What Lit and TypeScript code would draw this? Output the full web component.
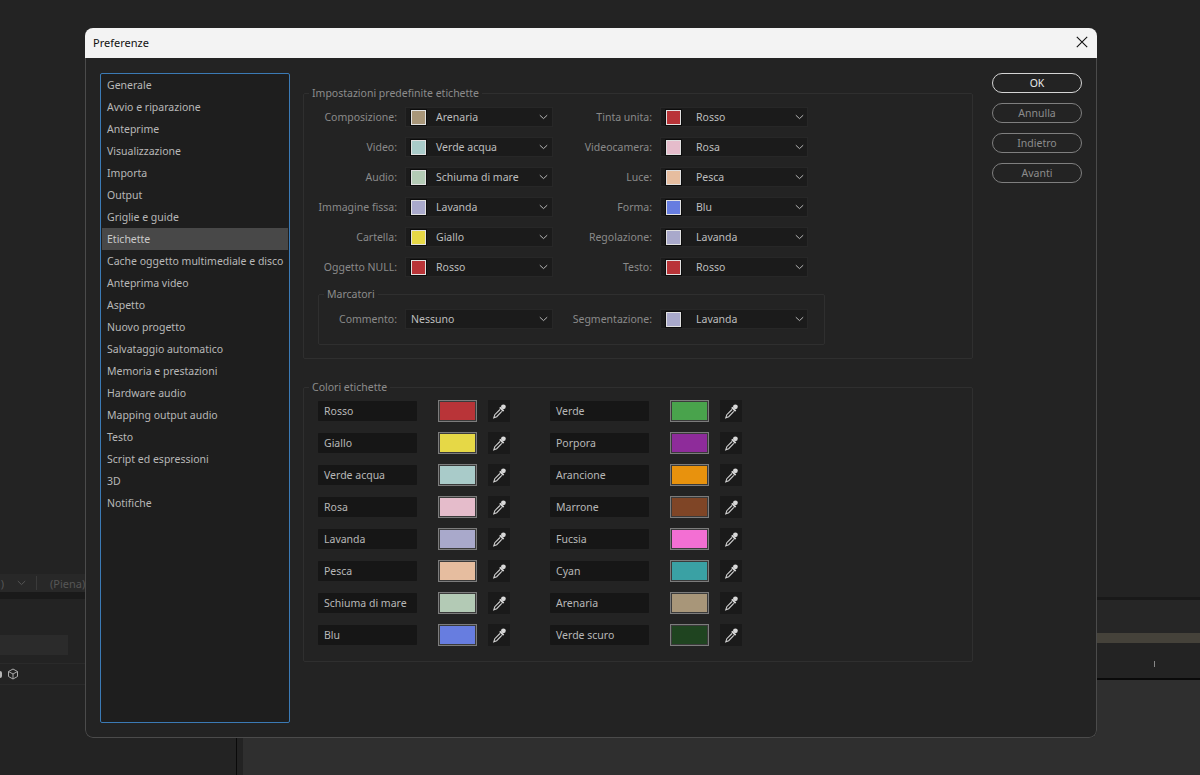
import { LitElement, html, css, svg } from "lit";
import { customElement } from "lit/decorators.js";

const C: Record<string, string> = {
  Rosso: "#b93438", Giallo: "#e6d846", "Verde acqua": "#a9cbc9", Rosa: "#e5bccb", Lavanda: "#a9a9cb",
  Pesca: "#e6bd9f", "Schiuma di mare": "#b3cab5", Blu: "#677de0", Verde: "#49a34c", Porpora: "#8e2c9a",
  Arancione: "#e8920d", Marrone: "#7f4526", Fucsia: "#f36fd3", Cyan: "#3aa1a4", Arenaria: "#a89679", "Verde scuro": "#1f4420",
};
const NAV = ["Generale","Avvio e riparazione","Anteprime","Visualizzazione","Importa","Output","Griglie e guide","Etichette","Cache oggetto multimediale e disco","Anteprima video","Aspetto","Nuovo progetto","Salvataggio automatico","Memoria e prestazioni","Hardware audio","Mapping output audio","Testo","Script ed espressioni","3D","Notifiche"];
const DEFAULTS: [string, string, string, string][] = [
  ["Composizione:", "Arenaria", "Tinta unita:", "Rosso"],
  ["Video:", "Verde acqua", "Videocamera:", "Rosa"],
  ["Audio:", "Schiuma di mare", "Luce:", "Pesca"],
  ["Immagine fissa:", "Lavanda", "Forma:", "Blu"],
  ["Cartella:", "Giallo", "Regolazione:", "Lavanda"],
  ["Oggetto NULL:", "Rosso", "Testo:", "Rosso"],
];
const COLORS = ["Rosso","Verde","Giallo","Porpora","Verde acqua","Arancione","Rosa","Marrone","Lavanda","Fucsia","Pesca","Cyan","Schiuma di mare","Arenaria","Blu","Verde scuro"];

const chevron = svg`<svg class="chev" width="9" height="6" viewBox="0 0 9 6"><path d="M.8 1.2 4.500 4.600 8.200 1.200" fill="none" stroke="#b5b5b5" stroke-width="1"/></svg>`;
const dropper = svg`<svg width="15" height="16" viewBox="0 0 15 16"><circle cx="11.400" cy="3.800" r="2.400" fill="#d8d8d8"/><path d="M7.800 4.400 11.600 8.200" stroke="#d8d8d8" stroke-width="1.800" fill="none"/><path d="M8 6.500 2.800 11.700 1.800 14.800 4.700 13.700 9.800 8.400" fill="none" stroke="#d0d0d0" stroke-width="1.100"/></svg>`;

@customElement("app-root")
export class AppRoot extends LitElement {
  static styles = css`
    :host { display: block; width: 1200px; height: 775px; overflow: hidden; background: #232323; font-family: "Noto Sans", sans-serif; font-size: 10.5px; }
    .stage { display: grid; width: 1200px; height: 775px; }
    .stage > * { grid-area: 1 / 1; }
    .bg { display: grid; grid-template-columns: 236px 1px 6px 1fr; height: 775px; }
    .bgl { display: flex; flex-direction: column; }
    .bgl .top { height: 574px; flex: none; }
    .tool { height: 18px; flex: none; background: #282828; color: #565656; display: flex; align-items: center; font-size: 11px; overflow: hidden; }
    .tool .zero { width: 4px; margin-right: 13px; text-align: right; overflow: hidden; }
    .tool .vsep { width: 1px; height: 14px; background: #3a3a3a; margin: 0 13px 0 10px; }
    .sep { height: 7px; flex: none; background: #1a1a1a; }
    .field { width: 68px; height: 20px; flex: none; background: #2b2b2b; margin-top: 36px; }
    .iconrow { height: 20px; flex: none; border-top: 1px solid #2a2a2a; border-bottom: 1px solid #2a2a2a; margin-top: 8px; display: flex; align-items: center; gap: 5px; }
    .half { width: 2px; height: 7px; background: #b5b5b5; border-radius: 0 4px 4px 0; }
    .bgd { display: flex; flex-direction: column; }
    .bgd i { height: 738px; flex: none; }
    .bgd b { flex: 1; background: #0a0a0a; }
    .bgm { display: flex; flex-direction: column; }
    .bgr { display: flex; flex-direction: column; align-items: stretch; }
    .bgr .top { height: 597px; flex: none; }
    .bgr .rdark { height: 3px; flex: none; background: #191919; }
    .bgr .rgap { height: 33px; flex: none; background: #262626; }
    .bgr .band { height: 10px; flex: none; background: #45423a; }
    .bgr .tick { height: 35px; flex: none; display: flex; justify-content: flex-end; padding: 18px 45px 0 0; box-sizing: border-box; }
    .bgr .tick i { width: 1px; height: 6px; background: #888; }
    .bgr .rblack { height: 2px; flex: none; background: #0a0a0a; }
    .bgr .low { flex: 1; background: #2f2f2f; }

    .dialog { margin: 28px 0 0 85px; width: 1012px; height: 710px; box-sizing: border-box; background: #232323; border-radius: 8px; overflow: hidden; display: flex; flex-direction: column; }
    .title { height: 30px; flex: none; box-sizing: border-box; background: #f3f3f3; color: #111; display: flex; align-items: center; justify-content: space-between; padding: 0 9px 2px 8px; font-size: 11px; }
    .title svg { display: block; }
    .frame { flex: 1; border: 1px solid #4b4b4b; border-top: none; border-radius: 0 0 8px 8px; }
    .body { display: flex; padding: 15px 14px 0 14px; gap: 13px; }
    .nav { width: 190px; height: 650px; box-sizing: border-box; flex: none; background: #1e1e1e; border: 1px solid #3b7ab5; border-radius: 2px; padding: 0 1px; }
    .nav div { height: 22px; line-height: 22px; padding-left: 5px; color: #b8b8b8; white-space: nowrap; }
    .nav .on { background: #484848; color: #cacaca; }
    .main { width: 670px; flex: none; padding-top: 20px; }
    .group { border: 1px solid #2f2f2f; box-sizing: border-box; border-radius: 2px; }
    .legend { height: 14px; line-height: 14px; margin: -8px 0 0 5px; padding: 0 3px; width: max-content; background: #232323; color: #8c8c8c; }
    .g1 { height: 266px; }
    .g2 { height: 275px; margin-top: 28px; }
    .rows { display: grid; grid-template-columns: 93px 148px 91px 148px; column-gap: 8px; row-gap: 10px; margin-top: 7px; }
    .lbl { color: #8a8a8a; text-align: right; line-height: 20px; white-space: nowrap; }
    .sel { height: 20px; box-sizing: border-box; background: #1b1b1b; border: 1px solid #272727; display: flex; align-items: center; color: #bebebe; position: relative; padding-left: 5px; white-space: nowrap; line-height: 18px; }
    .sel .sw { width: 15px; height: 15px; box-sizing: border-box; border: 1px solid #e0e0e0; outline: 1px solid #0c0c0c; flex: none; margin-right: 10px; }
    .sel.alt .sw { margin-right: 15px; }
    .sel .chev { position: absolute; right: 4px; top: 6px; }
    .sel.alt .chev { right: 3px; }
    .marc { margin: 17px 0 0 14px; width: 507px; height: 51px; }
    .marc .rows { grid-template-columns: 78px 148px 91px 148px; margin-top: 8px; }
    .cols { display: grid; grid-template-columns: 99px 21px 39px 11px 22px 40px 99px 21px 39px 11px 22px; row-gap: 10px; margin: 6px 0 0 14px; align-items: center; }
    .cols .n, .cols .s, .cols .b { grid-column-end: span 2; }
    .cols .b.r { grid-column-end: auto; }
    .inp { width: 99px; height: 20px; box-sizing: border-box; background: #161616; color: #b8b8b8; line-height: 20px; padding-left: 6px; border-radius: 1px; white-space: nowrap; }
    .swatch { width: 39px; height: 22px; box-sizing: border-box; border: 1px solid #7c7c7c; outline: 1px solid #3a3a3a; outline-offset: -2px; }
    .eye { width: 22px; height: 22px; background: #1a1a1a; display: flex; align-items: center; justify-content: center; }
    .btns { display: flex; flex-direction: column; gap: 10px; margin-left: 6px; width: 90px; }
    .btn { height: 20px; box-sizing: border-box; border: 1px solid #7f7f7f; border-radius: 10px; color: #8c8c8c; text-align: center; line-height: 18px; }
    .btn.ok { border-color: #d5d5d5; color: #e8e8e8; }
  `;

  sel(name: string, sw = true, alt = false) {
    return html`<div class="sel ${alt ? "alt" : ""}">${sw ? html`<span class="sw" style="background:${C[name]}"></span>` : ""}<span>${name}</span>${chevron}</div>`;
  }

  render() {
    return html`<div class="stage">
      <div class="bg">
        <div class="bgl">
          <div class="top"></div>
          <div class="tool"><span class="zero">)</span><svg width="9" height="6" viewBox="0 0 9 6"><path d="M.8 1 4.500 4.600 8.200 1" fill="none" stroke="#555"/></svg><span class="vsep"></span><span>(Piena)</span></div>
          <div class="sep"></div>
          <div class="field"></div>
          <div class="iconrow"><span class="half"></span><svg width="12" height="12" viewBox="0 0 12 12"><path d="M6 1 10.500 3.500V8.500L6 11 1.500 8.500V3.500ZM1.500 3.500 6 6 10.500 3.500M6 6V11" fill="none" stroke="#aaa"/></svg></div>
        </div>
        <div class="bgd"><i></i><b></b></div>
        <div class="bgm"></div>
        <div class="bgr">
          <div class="top"></div><div class="rdark"></div><div class="rgap"></div><div class="band"></div>
          <div class="tick"><i></i></div><div class="rblack"></div><div class="low"></div>
        </div>
      </div>
      <div class="dialog">
        <div class="title"><span>Preferenze</span><svg width="12" height="12" viewBox="0 0 12 12"><path d="M.8 .8 11.200 11.200M11.200 .8 .8 11.200" stroke="#111" stroke-width="1.100"/></svg></div>
        <div class="frame">
        <div class="body">
          <div class="nav">${NAV.map((n) => html`<div class=${n === "Etichette" ? "on" : ""}>${n}</div>`)}</div>
          <div class="main">
            <div class="group g1">
              <div class="legend">Impostazioni predefinite etichette</div>
              <div class="rows">
                ${DEFAULTS.map((r) => html`<div class="lbl">${r[0]}</div>${this.sel(r[1])}<div class="lbl">${r[2]}</div>${this.sel(r[3], true, true)}`)}
              </div>
              <div class="group marc">
                <div class="legend">Marcatori</div>
                <div class="rows">
                  <div class="lbl">Commento:</div>${this.sel("Nessuno", false)}
                  <div class="lbl">Segmentazione:</div>${this.sel("Lavanda", true, true)}
                </div>
              </div>
            </div>
            <div class="group g2">
              <div class="legend">Colori etichette</div>
              <div class="cols">
                ${COLORS.map((n, i) => {
                  const r = i % 2 ? "r" : "";
                  return html`<div class="inp n ${r}">${n}</div><div class="swatch s ${r}" style="background:${C[n]}"></div><div class="eye b ${r}">${dropper}</div>`;
                })}
              </div>
            </div>
          </div>
          <div class="btns">
            <div class="btn ok">OK</div><div class="btn">Annulla</div><div class="btn">Indietro</div><div class="btn">Avanti</div>
          </div>
        </div>
        </div>
      </div>
    </div>`;
  }
}
